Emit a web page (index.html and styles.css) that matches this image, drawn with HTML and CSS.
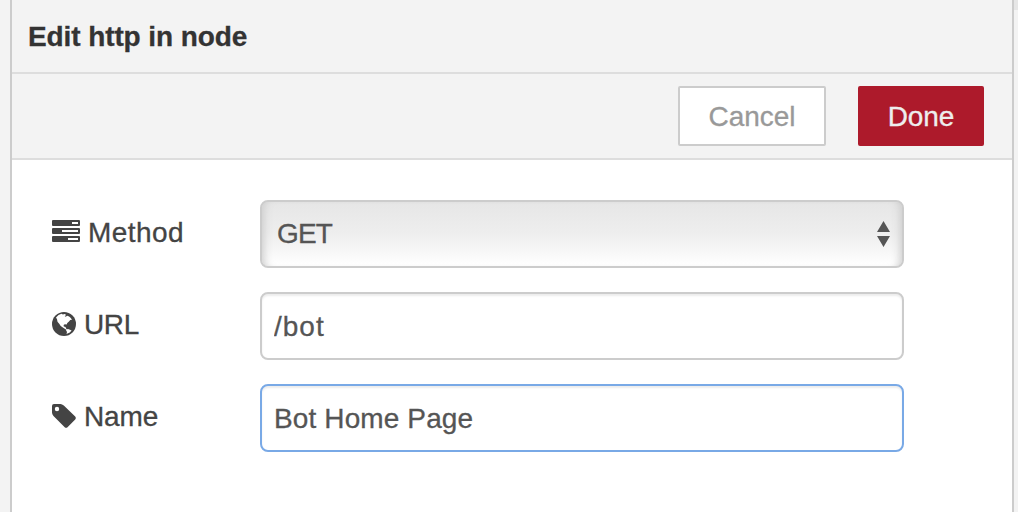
FILE: index.html
```html
<!DOCTYPE html>
<html lang="en">
<head>
<meta charset="utf-8">
<title>Edit http in node</title>
<link rel="stylesheet" href="styles.css">
</head>
<body>
<main class="tray">
  <header class="tray-header">Edit http in node</header>
  <div class="tray-toolbar">
    <button class="button">Cancel</button>
    <button class="button primary">Done</button>
  </div>
  <form class="form">
    <div class="row">
      <label class="label" for="url-method">
        <svg class="icon wide" viewBox="0 0 28 24"><path fill-rule="evenodd" d="M1 1h26q1 0 1 1v4q0 1-1 1H1q-1 0-1-1V2q0-1 1-1zM20 3v2h6V3zM1 9h26q1 0 1 1v4q0 1-1 1H1q-1 0-1-1v-4q0-1 1-1zM10 11v2h16v-2zM1 17h26q1 0 1 1v4q0 1-1 1H1q-1 0-1-1v-4q0-1 1-1zM16 19v2h10v-2z"/></svg>
        <span class="method-text">Method</span>
      </label>
      <div class="field select" id="url-method">
        <span>GET</span>
        <svg class="arrows" viewBox="0 0 13 26"><path d="M6.5 0 13 11H0zM0 15h13L6.5 26z"/></svg>
      </div>
    </div>
    <div class="row">
      <label class="label" for="url">
        <svg class="icon" viewBox="0 0 24 24"><circle cx="12" cy="12" r="12"/><path class="land" d="M4 5.500 6.500 3l3-1.200 1.400.7 1.800-.6 1.600 1.200-1.600.8.8.9 1.900-1 1.700.8 1.700 1.400 1.200 1.700-1.800.4-1.200 1.400-1.700 1.400-.6 1.700-1.800-.4-1.300.8.2 1.500 1.700.4.600 1.600 1.100.9-1.700-.1-2.300-1.500-2.500-1.700-1.500-2.400-1.700-1.900-.5-2.500zM13.800 17.800l2.200-.9 2 .8 1.600.9-1.800 1.900-3.300 1.600.5-2.200z"/></svg>
        <span>URL</span>
      </label>
      <input class="field url-field" id="url" value="/bot">
    </div>
    <div class="row">
      <label class="label" for="name">
        <svg class="icon" viewBox="0 0 24 24"><path fill-rule="evenodd" d="M2 0h6.500q1.500 0 3.300 1.500L23.200 12.600q1.200 1.400 0 2.800l-7.700 7.800q-1.400 1-2.800 0L1.500 12Q0 10 0 8.500V2Q0 0 2 0zm3 2.800a2.200 2.200 0 1 0 0 4.400 2.200 2.200 0 1 0 0-4.400z"/></svg>
        <span class="name-text">Name</span>
      </label>
      <input class="field active" id="name" value="Bot Home Page">
    </div>
  </form>
</main>
<aside class="sidebar"></aside>
</body>
</html>
```
FILE: styles.css
```css
* { box-sizing: border-box; }
body {
  margin: 0;
  height: 512px;
  padding-left: 10px;
  display: flex;
  overflow: hidden;
  background: #f3f3f3;
  color: #444;
  font: 28px/40px "Liberation Sans", Arial, sans-serif;
  -webkit-text-stroke: 0.3px;
}
.tray {
  width: 1004px;
  border: solid #ccc;
  border-width: 0 2px;
  background: #fff;
}
.tray-header {
  height: 74px;
  padding: 17px 16px 15px;
  border-bottom: 2px solid #ddd;
  background: #f3f3f3;
  color: #333;
  font-weight: bold;
  letter-spacing: -0.1px;
}
.tray-toolbar {
  height: 86px;
  padding: 12px 28px;
  display: flex;
  justify-content: flex-end;
  gap: 32px;
  border-bottom: 2px solid #ddd;
  background: #f3f3f3;
}
.button {
  width: 148px;
  height: 60px;
  padding: 2px 0 0;
  border: 2px solid #ccc;
  border-radius: 2px;
  background: #fff;
  color: #999;
  font: inherit;
  letter-spacing: -0.05px;
}
.primary {
  width: 126px;
  background: #ad1a2b;
  border-color: #ad1a2b;
  color: #eee;
}
.form {
  padding: 40px;
  display: grid;
  gap: 24px;
}
.row { display: flex; height: 68px; }
.label {
  width: 208px;
  height: 64px;
  display: flex;
  align-items: center;
  gap: 8px;
  letter-spacing: -0.4px;
}
.label span { padding-top: 2px; }
.label .method-text { letter-spacing: 0.45px; }
.label .name-text { letter-spacing: -0.15px; }
.icon { width: 24px; height: 24px; fill: #444; }
.wide { width: 28px; margin-top: -2px; }
.land { fill: #fff; }
.field {
  width: 644px;
  height: 68px;
  padding: 2px 12px 0;
  border: 2px solid #ccc;
  border-radius: 8px;
  outline: 0;
  background: #fff;
  color: #555;
  font: inherit;
  letter-spacing: 0.12px;
  box-shadow: inset 0 2px 2px rgba(0, 0, 0, .075);
}
.url-field { letter-spacing: 1px; }
.active { border-color: #79a9e6; }
.select {
  padding: 0 12px 0 15px;
  display: flex;
  align-items: center;
  justify-content: space-between;
  background: linear-gradient(#e6e6e6, #eee 50%, #fff);
  box-shadow: inset 9px 0 8px -7px #ccc, inset -9px 0 8px -7px #ccc;
  letter-spacing: -0.8px;
}
.arrows { width: 13px; height: 26px; fill: #555; }
.sidebar { width: 4px; height: 10px; background: #e6e6e6; }
```
